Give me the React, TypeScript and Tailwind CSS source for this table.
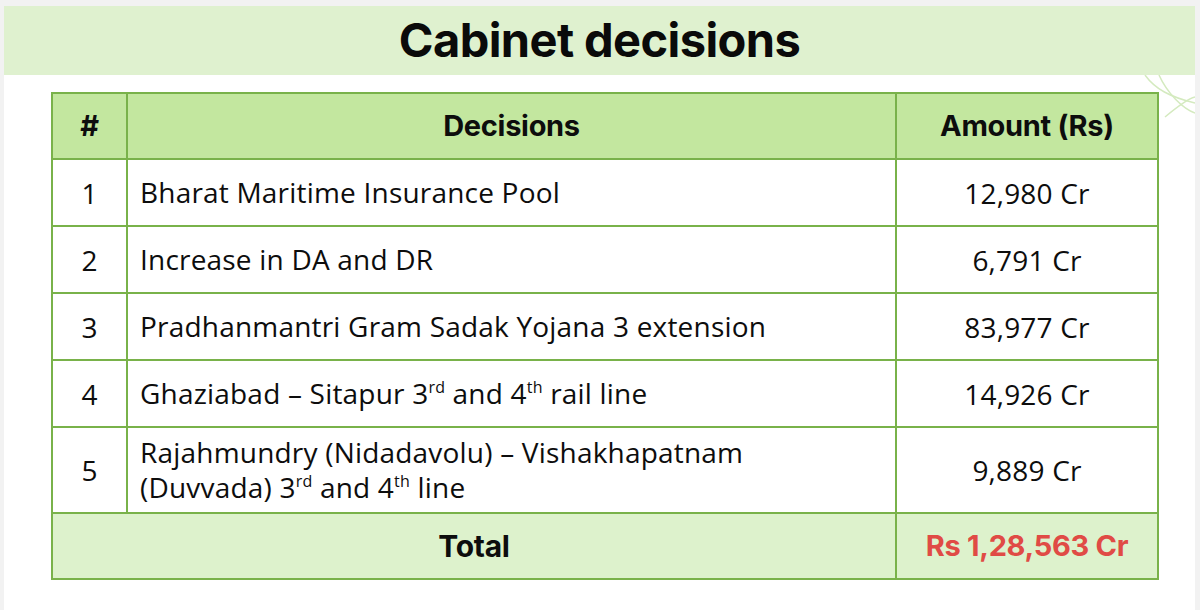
const sup = "text-[16px] leading-none align-[0.7em]"

const rows = [
  { n: "1", text: <>Bharat Maritime Insurance Pool</>, amount: "12,980 Cr" },
  { n: "2", text: <>Increase in DA and DR</>, amount: "6,791 Cr" },
  { n: "3", text: <>Pradhanmantri Gram Sadak Yojana 3 extension</>, amount: "83,977 Cr" },
  {
    n: "4",
    text: (
      <>
        Ghaziabad – Sitapur 3<span className={sup}>rd</span> and 4<span className={sup}>th</span> rail line
      </>
    ),
    amount: "14,926 Cr",
  },
  {
    n: "5",
    text: (
      <>
        Rajahmundry (Nidadavolu) – Vishakhapatnam
        <br />
        (Duvvada) 3<span className={sup}>rd</span> and 4<span className={sup}>th</span> line
      </>
    ),
    amount: "9,889 Cr",
    tall: true,
  },
]

export default function App() {
  return (
    <div className="h-[610px] w-[1200px] bg-[#f2f2f2] pt-[6px] pl-[4px] pr-[5px] font-['Open_Sans',sans-serif] text-[#0d0d0d]">
      <div className="relative h-full bg-white">
        {/* title band */}
        <div className="flex h-[69px] items-center justify-center bg-[#dff1cf]">
          <h1 className="font-['Inter',sans-serif] text-[47px] font-bold tracking-[-0.6px] text-[#0a0a0a]">
            Cabinet decisions
          </h1>
        </div>

        {/* decorative curves */}
        <svg
          className="absolute right-0 top-[69px]"
          width="110"
          height="50"
          viewBox="0 0 110 50"
          fill="none"
        >
          <path d="M60 0 C70 14 85 22 110 28" stroke="#d4eabf" strokeWidth="1.5" />
          <path d="M74 0 C82 18 98 34 110 38" stroke="#d4eabf" strokeWidth="1.5" />
          <path d="M80 42 C92 32 102 24 110 22" stroke="#d4eabf" strokeWidth="1.5" />
        </svg>

        <div className="pl-[47px] pt-[17px]">
          <table className="relative w-[1106px] table-fixed border-collapse text-[28px] tracking-[0.2px]">
            <colgroup>
              <col className="w-[75px]" />
              <col className="w-[769px]" />
              <col className="w-[262px]" />
            </colgroup>
            <thead>
              <tr className="h-[66px] bg-[#c3e79f]">
                <th className="border-2 border-[#79b24a] text-center font-['Inter',sans-serif] text-[29px] font-bold tracking-[-0.3px]">#</th>
                <th className="border-2 border-[#79b24a] text-center font-['Inter',sans-serif] text-[29px] font-bold tracking-[-0.3px]">Decisions</th>
                <th className="border-2 border-[#79b24a] text-center font-['Inter',sans-serif] text-[29px] font-bold tracking-[-0.3px]">Amount (Rs)</th>
              </tr>
            </thead>
            <tbody>
              {rows.map((r) => (
                <tr key={r.n} className={r.tall ? "h-[86px]" : "h-[67px]"}>
                  <td className="border-2 border-[#79b24a] text-center">{r.n}</td>
                  <td className="border-2 border-[#79b24a] pl-[12px] leading-[35px]">{r.text}</td>
                  <td className="border-2 border-[#79b24a] text-center">{r.amount}</td>
                </tr>
              ))}
              <tr className="h-[66px] bg-[#ddf2cc]">
                <td colSpan={2} className="border-2 border-[#79b24a] text-center font-['Inter',sans-serif] text-[30px] font-bold tracking-[-0.3px]">
                  Total
                </td>
                <td className="border-2 border-[#79b24a] text-center font-['Inter',sans-serif] text-[29px] font-bold tracking-[-0.3px] text-[#e04b45]">
                  Rs 1,28,563 Cr
                </td>
              </tr>
            </tbody>
          </table>
        </div>
      </div>
    </div>
  )
}
